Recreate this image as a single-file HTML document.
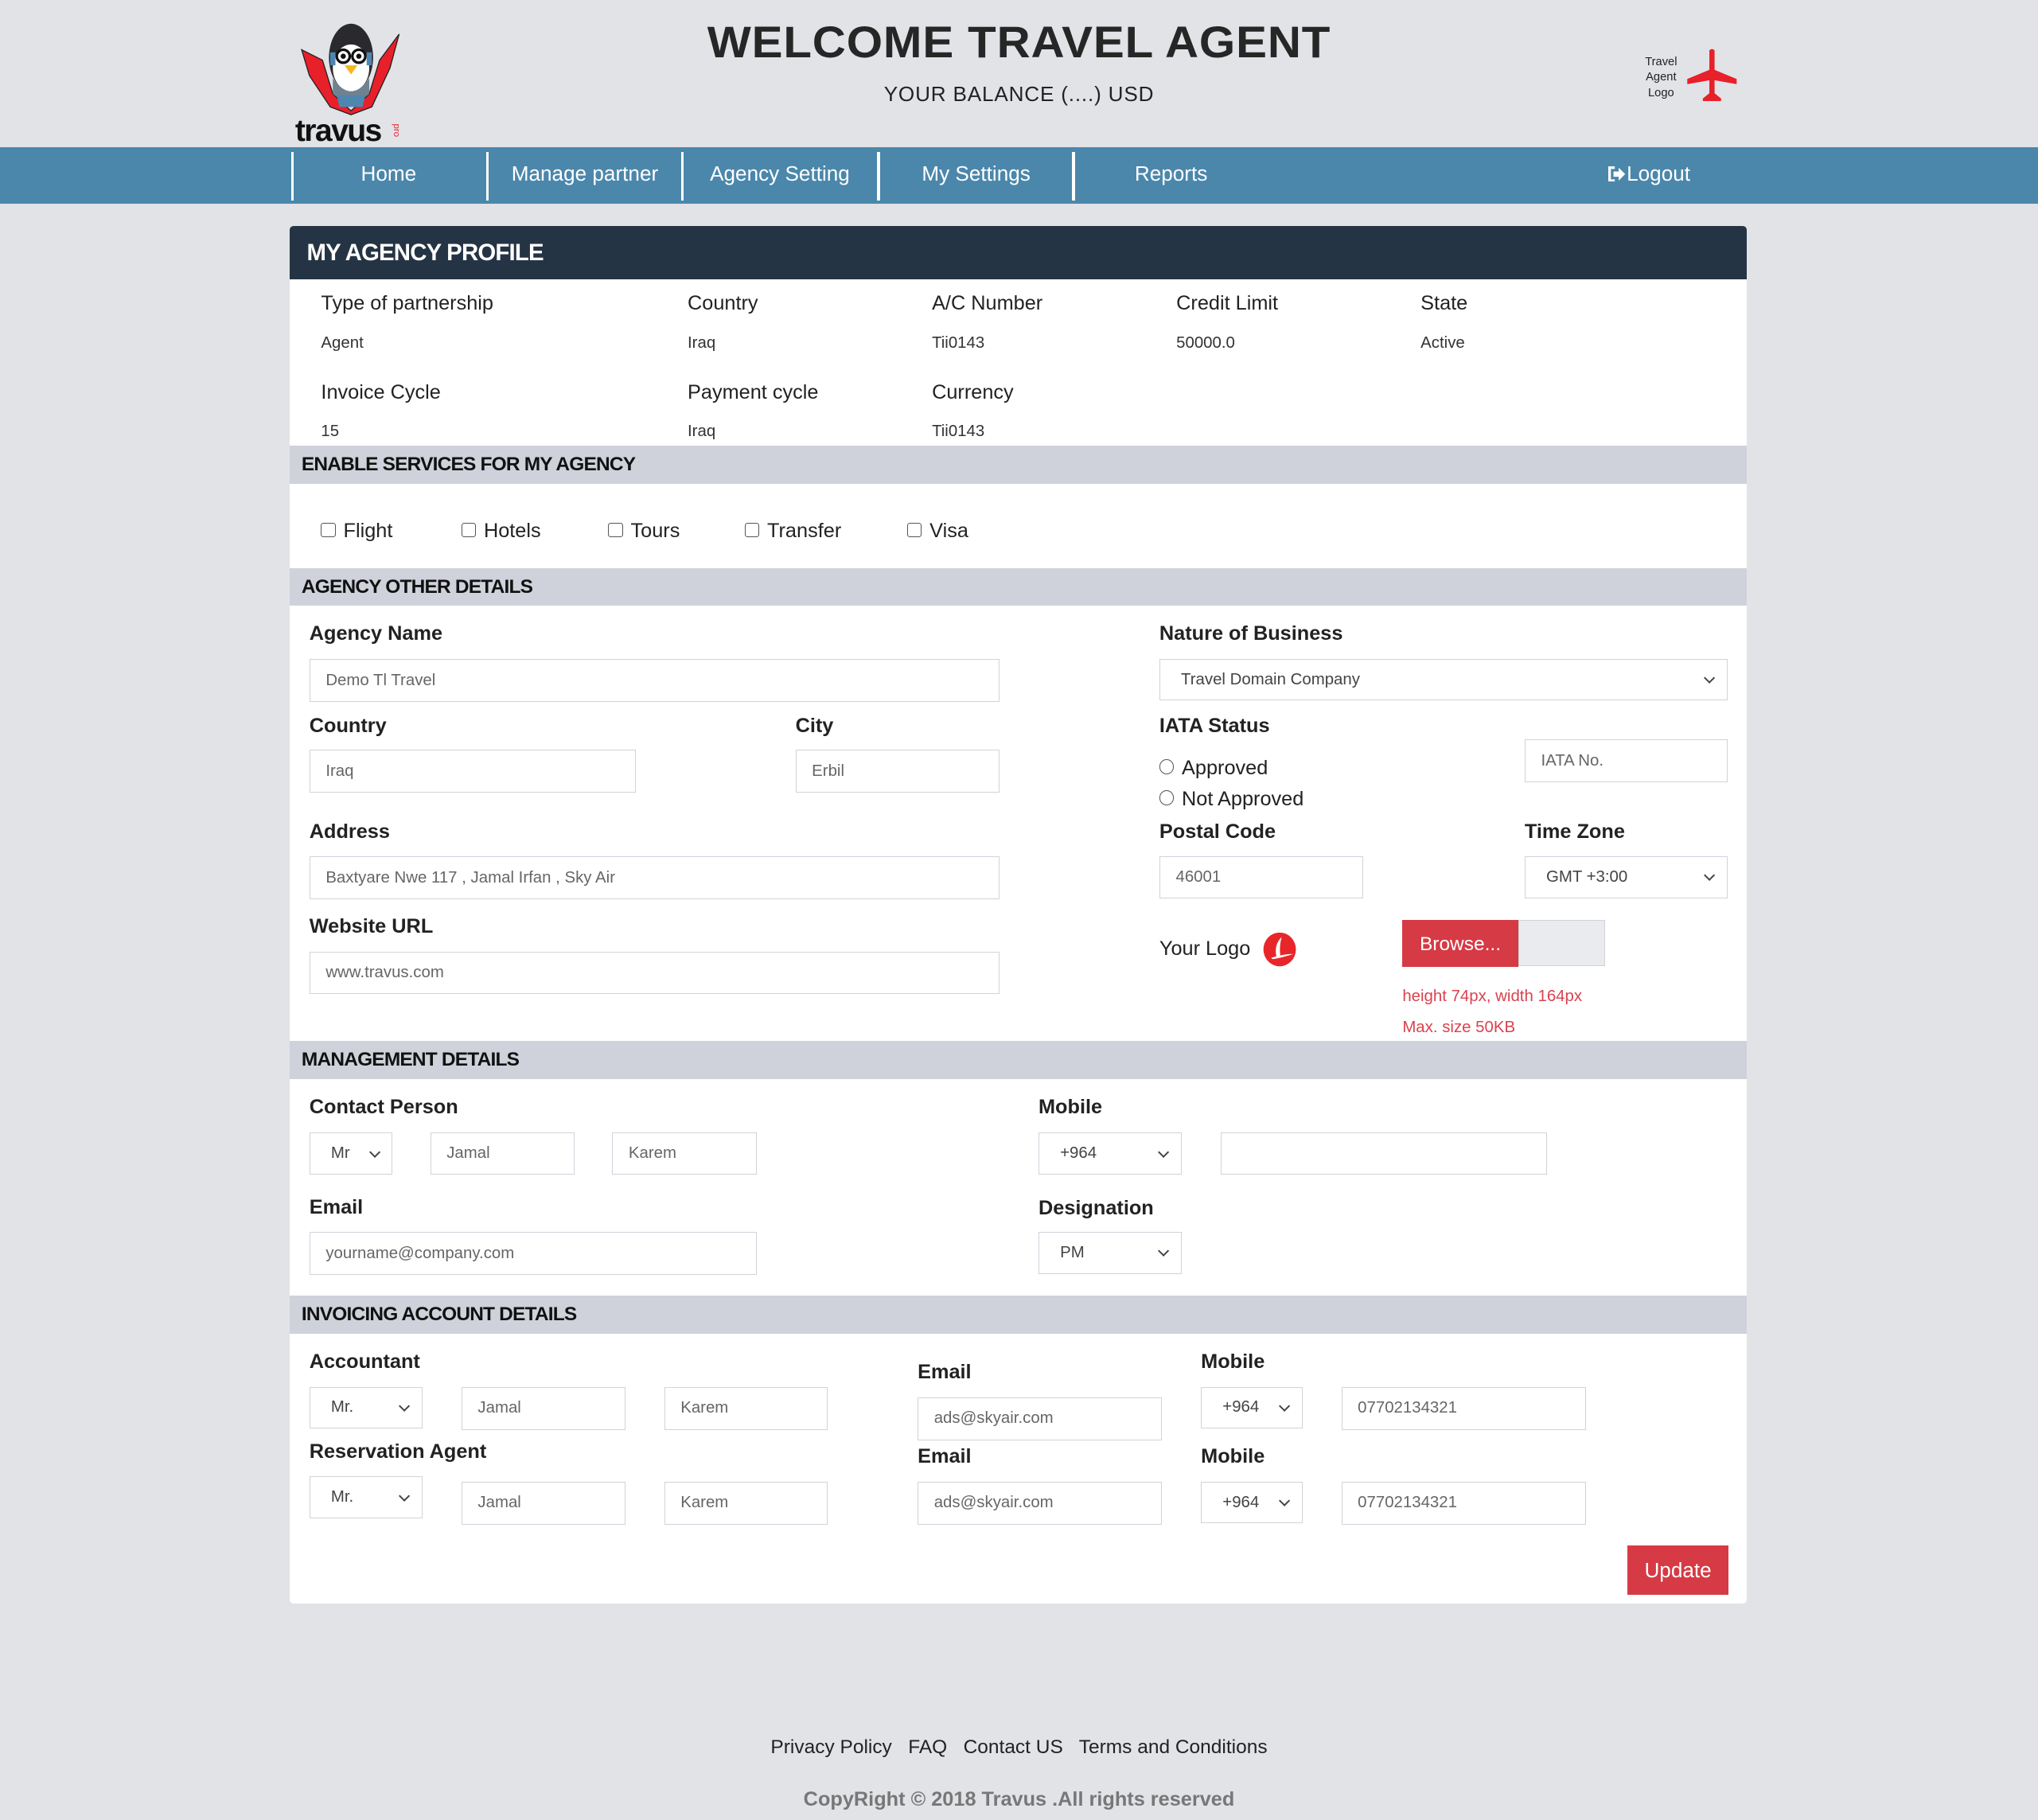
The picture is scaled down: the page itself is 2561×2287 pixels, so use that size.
<!DOCTYPE html>
<html><head><meta charset="utf-8"><style>
html,body{margin:0;padding:0;background:#e1e3e7;}
body{zoom:1.63329;width:1568px;height:1400.3px;overflow:hidden;position:relative;font-family:"Liberation Sans",sans-serif;color:#222;}
.a{position:absolute;}
.nav{left:0;top:113px;width:1568px;height:44px;background:#4b87ab;}
.sep{position:absolute;top:4px;width:2px;height:37px;background:#fff;}
.ni{position:absolute;top:11px;color:#fff;font-size:16px;text-align:center;width:150px;}
.card{left:223px;width:1121px;background:#fff;}
.bar{left:223px;width:1121px;height:29px;background:#cfd2db;}
.bar span{position:absolute;left:9px;top:6px;font-size:15px;font-weight:bold;letter-spacing:-0.5px;color:#111;}
.lb{position:absolute;font-size:15.5px;font-weight:bold;color:#222;}
.lbn{position:absolute;font-size:15.5px;color:#222;}
.v{position:absolute;font-size:12.5px;color:#333;}
.in{position:absolute;box-sizing:border-box;border:1px solid #cfd3da;background:#fff;font-size:12.5px;color:#666;padding-left:12px;display:flex;align-items:center;}
.sel:after{content:"";position:absolute;right:10px;top:50%;width:5px;height:5px;border-right:1.3px solid #444;border-bottom:1.3px solid #444;transform:translateY(-70%) rotate(45deg);}
.sel{color:#444;padding-left:16px;}
.cb{position:absolute;font-size:15.5px;color:#222;}
.cb i{display:inline-block;width:10px;height:10px;border:1px solid #555;border-radius:2px;margin-right:6px;vertical-align:0px;}
.rd i{display:inline-block;width:10px;height:10px;border:1px solid #555;border-radius:50%;margin-right:6px;}
</style></head><body>
<svg class="a" style="left:224px;top:12px" width="92" height="100" viewBox="224 12 92 100">
<path d="M232 38 L248 46 L256 72 L270 85 L284 72 L292 46 L307 26 L300 52 L286 82 L270 88 L254 82 L238 58 Z" fill="#e8202a" stroke="#222" stroke-width="0.8"/>
<ellipse cx="270" cy="44" rx="17" ry="26" fill="#2a2a2e"/>
<ellipse cx="270" cy="52" rx="14" ry="18" fill="#fff"/>
<path d="M256 60 Q270 80 284 60 L284 72 Q270 84 256 72Z" fill="#6f8290"/>
<circle cx="264" cy="43" r="5" fill="#fff" stroke="#111" stroke-width="2"/><circle cx="276" cy="43" r="5" fill="#fff" stroke="#111" stroke-width="2"/>
<circle cx="264" cy="43" r="2" fill="#111"/><circle cx="276" cy="43" r="2" fill="#111"/>
<path d="M265 50 L275 50 L270 57Z" fill="#f4b81f"/>
<rect x="254" y="40" width="4" height="10" fill="#4f86b0"/><rect x="282" y="40" width="4" height="10" fill="#4f86b0"/>
<path d="M259 73 L281 73 L279 82 L261 82Z" fill="#4f86b0"/>
<text x="227" y="108" font-family="Liberation Sans" font-weight="bold" font-size="24" fill="#111" letter-spacing="-1">travus</text>
<text x="303" y="95" font-family="Liberation Sans" font-size="7" fill="#e8202a" transform="rotate(90 303 95)">pro</text>
</svg>
<div class="a" style="left:0;width:1568px;top:13px;text-align:center;font-size:34px;letter-spacing:0.5px;font-weight:bold;color:#262626;transform:scaleX(1.05);">WELCOME TRAVEL AGENT</div>
<div class="a" style="left:0;width:1568px;top:63px;text-align:center;font-size:16px;color:#222;letter-spacing:0.5px;">YOUR BALANCE (....) USD</div>
<div class="a" style="left:1258px;top:42px;font-size:9px;line-height:12px;text-align:center;width:40px;color:#222;">Travel<br>Agent<br>Logo</div>
<svg class="a" style="left:1296px;top:37px" width="42" height="42" viewBox="0 0 42 42"><path d="M19 2 Q21 0 23 2 L23 17 L40 24 L40 28 L23 25 L23 35 L28 39 L28 41 L14 41 L14 39 L19 35 L19 25 L2 28 L2 24 L19 17Z" fill="#e8202a"/></svg>
<div class="a nav">
<div class="sep" style="left:224px"></div><div class="sep" style="left:374px"></div><div class="sep" style="left:524px"></div><div class="sep" style="left:675px"></div><div class="sep" style="left:825px"></div>
<div class="ni" style="left:224px">Home</div><div class="ni" style="left:375px">Manage partner</div><div class="ni" style="left:525px">Agency Setting</div><div class="ni" style="left:676px">My Settings</div><div class="ni" style="left:826px">Reports</div>
<div class="ni" style="left:1194px"><svg width="14" height="12" viewBox="0 0 14 12" style="vertical-align:-1px"><path d="M5 1 H1 V11 H5" fill="none" stroke="#fff" stroke-width="2"/><path d="M4 4 H8 V1 L13 6 L8 11 V8 H4Z" fill="#fff"/></svg>Logout</div>
</div>
<div class="a" style="left:223px;top:174px;width:1121px;height:41px;background:#253444;border-radius:3px 3px 0 0;"><span style="position:absolute;left:13px;top:10px;color:#fff;font-weight:bold;font-size:18px;letter-spacing:-0.5px;">MY AGENCY PROFILE</span></div>
<div class="a card" style="top:215px;height:128px;"></div>
<div class="lbn" style="left:247px;top:225px">Type of partnership</div><div class="lbn" style="left:529px;top:225px">Country</div><div class="lbn" style="left:717px;top:225px">A/C Number</div><div class="lbn" style="left:905px;top:225px">Credit Limit</div><div class="lbn" style="left:1093px;top:225px">State</div>
<div class="v" style="left:247px;top:257px">Agent</div><div class="v" style="left:529px;top:257px">Iraq</div><div class="v" style="left:717px;top:257px">Tii0143</div><div class="v" style="left:905px;top:257px">50000.0</div><div class="v" style="left:1093px;top:257px">Active</div>
<div class="lbn" style="left:247px;top:293px">Invoice Cycle</div><div class="lbn" style="left:529px;top:293px">Payment cycle</div><div class="lbn" style="left:717px;top:293px">Currency</div>
<div class="v" style="left:247px;top:325px">15</div><div class="v" style="left:529px;top:325px">Iraq</div><div class="v" style="left:717px;top:325px">Tii0143</div>

<div class="a bar" style="top:343px"><span>ENABLE SERVICES FOR MY AGENCY</span></div>
<div class="a card" style="top:372px;height:65px;"></div>
<div class="cb" style="left:247px;top:400px"><i></i>Flight</div><div class="cb" style="left:355px;top:400px"><i></i>Hotels</div><div class="cb" style="left:468px;top:400px"><i></i>Tours</div><div class="cb" style="left:573px;top:400px"><i></i>Transfer</div><div class="cb" style="left:698px;top:400px"><i></i>Visa</div>

<div class="a bar" style="top:437px"><span>AGENCY OTHER DETAILS</span></div>
<div class="a card" style="top:466px;height:335px;"></div>
<div class="lb" style="left:238px;top:479px">Agency Name</div>
<div class="in" style="left:238px;top:507px;width:531px;height:33px">Demo Tl Travel</div>
<div class="lb" style="left:238px;top:550px">Country</div><div class="lb" style="left:612px;top:550px">City</div>
<div class="in" style="left:238px;top:577px;width:251px;height:33px">Iraq</div>
<div class="in" style="left:612px;top:577px;width:157px;height:33px">Erbil</div>
<div class="lb" style="left:238px;top:631px">Address</div>
<div class="in" style="left:238px;top:659px;width:531px;height:33px">Baxtyare Nwe 117 , Jamal Irfan , Sky Air</div>
<div class="lb" style="left:238px;top:704px">Website URL</div>
<div class="in" style="left:238px;top:732px;width:531px;height:33px">www.travus.com</div>
<div class="lb" style="left:892px;top:479px">Nature of Business</div>
<div class="in sel" style="left:892px;top:507px;width:437px;height:32px">Travel Domain Company</div>
<div class="lb" style="left:892px;top:550px">IATA Status</div>
<div class="cb rd" style="left:892px;top:582px"><i></i>Approved</div>
<div class="cb rd" style="left:892px;top:606px"><i></i>Not Approved</div>
<div class="in" style="left:1173px;top:569px;width:156px;height:33px">IATA No.</div>
<div class="lb" style="left:892px;top:631px">Postal Code</div><div class="lb" style="left:1173px;top:631px">Time Zone</div>
<div class="in" style="left:892px;top:659px;width:157px;height:32px">46001</div>
<div class="in sel" style="left:1173px;top:659px;width:156px;height:32px">GMT +3:00</div>
<div class="lbn" style="left:892px;top:721px">Your Logo</div>
<svg class="a" style="left:971px;top:717px" width="27" height="27" viewBox="0 0 27 27"><ellipse cx="13.5" cy="13.5" rx="12.5" ry="13" fill="#e8262a"/><path d="M7 20 Q16 17 24 17 Q15 20 8 21Z M11 19 Q9 10 15 4 Q13 12 14 18Z" fill="#fff"/></svg>
<div class="a" style="left:1079px;top:708px;width:89px;height:36px;background:#d63a45;color:#fff;font-size:15px;line-height:38px;text-align:center;">Browse...</div>
<div class="a" style="left:1168px;top:708px;width:67px;height:35px;background:#e9ebef;border:1px solid #d0d3d8;box-sizing:border-box;"></div>
<div class="a" style="left:1079px;top:760px;font-size:12.5px;color:#d9434e;">height 74px, width 164px</div>
<div class="a" style="left:1079px;top:784px;font-size:12.5px;color:#d9434e;">Max. size 50KB</div>

<div class="a bar" style="top:801px"><span>MANAGEMENT DETAILS</span></div>
<div class="a card" style="top:830px;height:167px;"></div>
<div class="lb" style="left:238px;top:843px">Contact Person</div>
<div class="in sel" style="left:238px;top:871px;width:64px;height:33px">Mr</div>
<div class="in" style="left:331px;top:871px;width:111px;height:33px">Jamal</div>
<div class="in" style="left:471px;top:871px;width:111px;height:33px">Karem</div>
<div class="lb" style="left:799px;top:843px">Mobile</div>
<div class="in sel" style="left:799px;top:871px;width:110px;height:33px">+964</div>
<div class="in" style="left:939px;top:871px;width:251px;height:33px"></div>
<div class="lb" style="left:238px;top:920px">Email</div>
<div class="in" style="left:238px;top:948px;width:344px;height:33px">yourname@company.com</div>
<div class="lb" style="left:799px;top:921px">Designation</div>
<div class="in sel" style="left:799px;top:948px;width:110px;height:32px">PM</div>

<div class="a bar" style="top:997px"><span>INVOICING ACCOUNT DETAILS</span></div>
<div class="a card" style="top:1026px;height:208px;border-radius:0 0 3px 3px;"></div>
<div class="lb" style="left:238px;top:1039px">Accountant</div>
<div class="in sel" style="left:238px;top:1067px;width:87px;height:32px">Mr.</div>
<div class="in" style="left:355px;top:1067px;width:126px;height:33px">Jamal</div>
<div class="in" style="left:511px;top:1067px;width:126px;height:33px">Karem</div>
<div class="lb" style="left:706px;top:1047px">Email</div>
<div class="in" style="left:706px;top:1075px;width:188px;height:33px">ads@skyair.com</div>
<div class="lb" style="left:924px;top:1039px">Mobile</div>
<div class="in sel" style="left:924px;top:1067px;width:78px;height:32px">+964</div>
<div class="in" style="left:1032px;top:1067px;width:188px;height:33px">07702134321</div>
<div class="lb" style="left:238px;top:1108px">Reservation Agent</div>
<div class="in sel" style="left:238px;top:1136px;width:87px;height:32px">Mr.</div>
<div class="in" style="left:355px;top:1140px;width:126px;height:33px">Jamal</div>
<div class="in" style="left:511px;top:1140px;width:126px;height:33px">Karem</div>
<div class="lb" style="left:706px;top:1112px">Email</div>
<div class="in" style="left:706px;top:1140px;width:188px;height:33px">ads@skyair.com</div>
<div class="lb" style="left:924px;top:1112px">Mobile</div>
<div class="in sel" style="left:924px;top:1140px;width:78px;height:32px">+964</div>
<div class="in" style="left:1032px;top:1140px;width:188px;height:33px">07702134321</div>
<div class="a" style="left:1252px;top:1189px;width:78px;height:38px;background:#d63a45;color:#fff;font-size:16px;line-height:39px;text-align:center;">Update</div>

<div class="a" style="left:0;width:1568px;top:1336px;text-align:center;font-size:15px;color:#222;">Privacy Policy&nbsp;&nbsp; FAQ&nbsp;&nbsp; Contact US&nbsp;&nbsp; Terms and Conditions</div>
<div class="a" style="left:0;width:1568px;top:1376px;text-align:center;font-size:15.5px;color:#777;font-weight:bold;">CopyRight © 2018 Travus .All rights reserved</div>
</body></html>
